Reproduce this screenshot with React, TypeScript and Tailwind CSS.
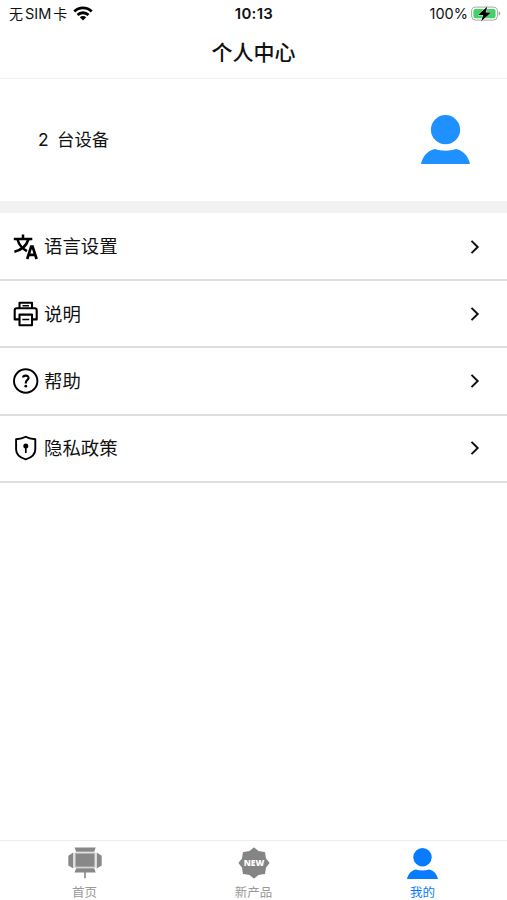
import type { ReactNode } from "react";

interface MenuRowProps {
  icon: ReactNode;
  label: string;
}

interface TabProps {
  icon: ReactNode;
  label: string;
  active?: boolean;
}

const WifiIcon = () => (
  <svg width="20" height="15" viewBox="0 0 20 15" fill="none" stroke="#000" strokeWidth="2.8">
    <path d="M1.3 5.4a12.5 12.5 0 0 1 17.4 0" />
    <path d="M4.5 9a7.9 7.9 0 0 1 11 0" />
    <path d="M10 14.4 6.800 11.3a4.500 4.500 0 0 1 6.400 0Z" fill="#000" stroke="none" />
  </svg>
);

const BatteryIcon = () => (
  <svg width="30" height="16" viewBox="0 0 30 16">
    <rect x="0.6" y="1.1" width="25.8" height="13" rx="4" fill="#fff" stroke="#a6a6a6" />
    <rect x="2.4" y="2.9" width="22.2" height="9.4" rx="2.2" fill="#3fd465" />
    <path d="M27.7 5.2c2.2.8 2.2 3.6 0 4.400Z" fill="#a6a6a6" />
    <path
      d="M16.400.6 7 9h5.200L10.200 15.200 20 6.400h-5.400Z"
      fill="#000"
      stroke="#fff"
      strokeWidth="0.8"
      paintOrder="stroke"
    />
  </svg>
);

const UserIcon = ({ size, color }: { size: number; color: string }) => (
  <svg width={size} height={size} viewBox="0 0 49 49" fill={color}>
    <circle cx="24.5" cy="14.7" r="14.6" />
    <path d="M0 49C1.600 41.500 6.500 35.500 14 34c6.500 2.300 14.500 2.300 21 0C42.500 35.500 47.400 41.500 49 49Z" />
  </svg>
);

const TranslateIcon = () => (
  <svg width="26" height="26" viewBox="0 0 26 26" fill="none" stroke="#000" strokeWidth="2.5">
    <path d="M.8 4.900h18.500M10 .5v4M4.500 5.500c1.700 6 5.400 9.400 9.400 11.600M15.400 5.500C13.700 10.900 8.900 15.900 1.400 17.700" />
    <path d="m14.200 25 4-12.400h1.400l4 12.400M15.600 20.900h7" strokeWidth="2.700" />
  </svg>
);

const PrinterIcon = () => (
  <svg width="26" height="26" viewBox="0 0 26 26" fill="none" stroke="#000" strokeWidth="2.1" strokeLinejoin="round">
    <path d="M6.500 7.200V1.700h12.500v5.500" />
    <path d="M6.500 18.400H1.700V9.200q0-2 2-2h18q2 0 2 2v9.200H19" />
    <path d="M6.500 13.600h12.500v10.700H6.500Z" />
    <path d="M9.500 4.700h6.500M9.300 18.500h7" strokeWidth="1.500" />
  </svg>
);

const HelpIcon = () => (
  <svg width="26" height="26" viewBox="0 0 26 26" fill="none" stroke="#000">
    <circle cx="12.700" cy="13" r="11.700" strokeWidth="1.900" />
    <path d="M10.100 9.500c.3-2.700 5.600-2.500 5.400.5-.1 2-2.700 2.200-2.700 4.700v.8" strokeWidth="2.200" />
    <circle cx="12.800" cy="18.200" r="1.400" fill="#000" stroke="none" />
  </svg>
);

const ShieldIcon = () => (
  <svg width="26" height="26" viewBox="0 0 26 26" fill="none" stroke="#000" strokeLinejoin="round">
    <path
      d="M12.700 1.700c2.600 1.600 6 2.300 9.600 2.600v10.200c0 4.900-4 8.200-9.600 9.900-5.600-1.700-9.600-5-9.600-9.900V4.300c3.600-.3 7-1 9.600-2.600Z"
      strokeWidth="1.900"
    />
    <circle cx="12.800" cy="10.900" r="2.500" fill="#000" stroke="none" />
    <path d="M12.800 11v7" strokeWidth="1.700" />
  </svg>
);

const ChevronIcon = () => (
  <svg width="10" height="16" viewBox="0 0 10 16" fill="none" stroke="#111" strokeWidth="2">
    <path d="m1.500 1.900 6.200 6.100-6.200 6.100" />
  </svg>
);

const LightPanelIcon = () => (
  <svg width="34" height="32" viewBox="0 0 34 32" fill="#888">
    <path d="M6.500.5h21.200l-1.500 4.300H8.200ZM8.200 21.300h18l1.500 4.200H6.500ZM.3 8.800l5-3.200v15.800l-5-2.800ZM33.700 8.800l-5-3.200v15.800l5-2.800Z" />
    <rect x="7.200" y="6.200" width="19.600" height="13.800" stroke="#b8b8b8" strokeWidth="1.200" />
    <path d="M16.200 25h1.600v6.200h-1.600Z" />
  </svg>
);

const NewIcon = () => (
  <svg width="32" height="32" viewBox="0 0 32 32">
    <path
      d="m16 1.400 4.300 3.400 6 .9.900 6 3.400 4.300-3.400 4.300-.9 6-6 .9-4.300 3.400-4.300-3.400-6-.9-.9-6L1.400 16l3.400-4.300.9-6 6-.9Z"
      fill="#858585"
      stroke="#858585"
      strokeWidth="1.600"
      strokeLinejoin="round"
    />
    <text
      x="16"
      y="19.200"
      textAnchor="middle"
      textLength="20.500"
      lengthAdjust="spacingAndGlyphs"
      fill="#fff"
      fontFamily="Open Sans, sans-serif"
      fontSize="9"
      fontWeight="800"
    >
      NEW
    </text>
  </svg>
);

const MenuRow = ({ icon, label }: MenuRowProps) => (
  <li className="flex h-[67.2px] items-center border-b-2 border-[#dedede] pr-[27px] pl-[12.500px]">
    {icon}
    <span className="ml-[5.500px] flex-1 text-[18.400px] leading-none">{label}</span>
    <ChevronIcon />
  </li>
);

const Tab = ({ icon, label, active }: TabProps) => (
  <button
    className={`flex flex-1 flex-col items-center pt-1.5 ${active ? "text-[#087cff]" : "text-[#999]"}`}
  >
    <span className="flex h-8 items-center">{icon}</span>
    <span className="mt-2 text-[12.500px] leading-none">{label}</span>
  </button>
);

export default function App() {
  return (
    <div className="flex h-screen flex-col bg-white font-['Inter','Noto_Sans_CJK_SC',sans-serif] text-[#111]">
      <div className="grid h-7 grid-cols-3 items-center pr-[6px] pl-[9px] text-[14.500px] leading-none">
        <div className="flex items-center">
          <span className="flex gap-0.5 whitespace-nowrap">
            <span className="text-[14px]">无</span>
            <span>SIM</span>
            <span className="text-[14px]">卡</span>
          </span>
          <span className="ml-1.5 pb-0.5">
            <WifiIcon />
          </span>
        </div>
        <span className="pr-0.5 pb-0.5 text-center text-[15px] font-semibold tracking-[0.3px]">10:13</span>
        <div className="flex items-center justify-end gap-[3px]">
          <span>100%</span>
          <span className="pb-px">
            <BatteryIcon />
          </span>
        </div>
      </div>

      <header className="flex h-[51px] items-center justify-center border-b border-[#f0f0f0] pb-px">
        <h1 className="text-[21px] leading-none font-medium">个人中心</h1>
      </header>

      <section className="flex h-[122px] items-center justify-between pr-[37px] pb-0.5 pl-[38px]">
        <p className="flex gap-[9px] pt-0.5 text-[17.400px] leading-none">
          <span className="w-2.5">2</span>
          <span>台设备</span>
        </p>
        <UserIcon size={49} color="#1e90ff" />
      </section>

      <div className="h-3 bg-[#f2f2f2]" />

      <ul className="pt-px">
        <MenuRow icon={<TranslateIcon />} label="语言设置" />
        <MenuRow icon={<PrinterIcon />} label="说明" />
        <MenuRow icon={<HelpIcon />} label="帮助" />
        <MenuRow icon={<ShieldIcon />} label="隐私政策" />
      </ul>

      <nav className="mt-auto flex h-[60px] border-t border-[#ececec]">
        <Tab icon={<LightPanelIcon />} label="首页" />
        <Tab icon={<NewIcon />} label="新产品" />
        <Tab icon={<UserIcon size={31} color="#087cff" />} label="我的" active />
      </nav>
    </div>
  );
}
